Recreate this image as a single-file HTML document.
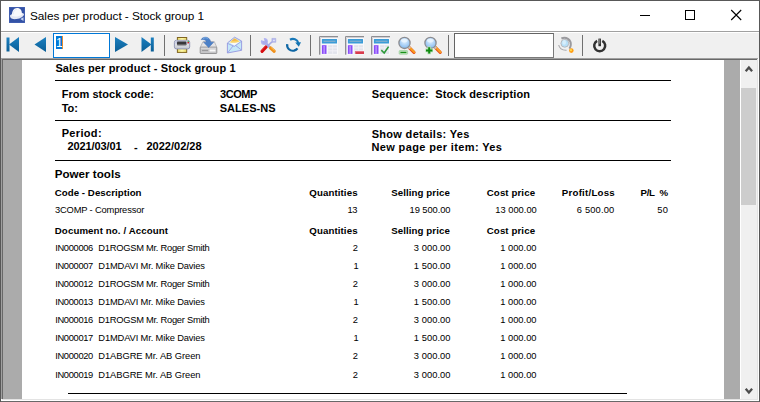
<!DOCTYPE html>
<html>
<head>
<meta charset="utf-8">
<title>Sales per product - Stock group 1</title>
<style>
html,body{margin:0;padding:0;}
body{width:760px;height:402px;overflow:hidden;background:#fff;font-family:"Liberation Sans",sans-serif;position:relative;}
#win{position:absolute;left:0;top:0;width:760px;height:402px;background:#fff;overflow:hidden;}
.abs{position:absolute;}
/* window border */
#bt{left:0;top:0;width:760px;height:1px;background:#585858;}
#bl{left:0;top:0;width:1px;height:402px;background:#585858;}
#br{left:759px;top:0;width:1px;height:402px;background:#585858;}
/* title */
#title{left:30px;top:8.5px;font-size:11.8px;color:#000;white-space:nowrap;line-height:15px;letter-spacing:-0.05px;}
/* toolbar */
#tb{left:1px;top:32px;width:758px;height:26px;background:#f0f0f0;}
#tbline{left:1px;top:58px;width:757px;height:1px;background:#a0a0a0;}
#tbline2{left:2px;top:59px;width:756px;height:1px;background:#696969;}
#edgeL1{left:1px;top:59px;width:1px;height:340px;background:#a0a0a0;}
#edgeL2{left:2px;top:60px;width:1px;height:339px;background:#696969;}
#edgeR{left:757px;top:59px;width:1px;height:341px;background:#e3e3e3;}
#edgeR2{left:758px;top:58px;width:1px;height:343px;background:#fff;}
#bot1{left:2px;top:399px;width:756px;height:1px;background:#e3e3e3;}
#bot2{left:1px;top:400px;width:758px;height:1px;background:#fff;}
#bot3{left:0px;top:401px;width:760px;height:1px;background:#686868;}
.sep{position:absolute;top:36px;width:1px;height:20px;background:#8e8e8e;}
/* content */
#grayL{left:3px;top:60px;width:19px;height:339px;background:#ababab;}
#page{left:22px;top:60px;width:702px;height:339px;background:#fff;}
#grayR{left:724px;top:60px;width:16px;height:339px;background:#ababab;}
#sb{left:740px;top:60px;width:17px;height:339px;background:#f0f0f0;border-left:1px solid #fff;box-sizing:border-box;}
#thumb{left:741px;top:88px;width:15px;height:117px;background:#cdcdcd;}
.t{position:absolute;white-space:pre;color:#000;}
.n{color:#000;}
.b{font-weight:bold;}
.r{text-align:right;}
.hl{position:absolute;height:1px;background:#000;}
.row{font-size:10px;}
</style>
</head>
<body>
<div id="win">
<div class="abs" id="title">Sales per product - Stock group 1</div>
<!-- app icon -->
<svg class="abs" style="left:9px;top:7px" width="16" height="16" viewBox="0 0 16 16">
<rect x="0" y="0" width="16" height="16" fill="#4a66b6"/>
<rect x="0.6" y="0.6" width="14.8" height="14.8" fill="#3352a6"/>
<path d="M1 9.3 C0.8 7.4 3.6 6.6 8 6.2 C12 5.8 15 5.8 15 7.2 C15 9 11.6 11.5 7.6 12.1 C4 12.6 1.2 11.4 1 9.3Z" fill="#e4e8f4"/>
<path d="M3 8.8 C2.5 4.2 4.8 0.9 8 0.9 C11.4 0.9 13.3 3.6 12.9 7.7 C10.4 9.6 5.4 10 3 8.8Z" fill="#f8f9fc"/>
<path d="M4.4 7.4 C4.2 4.4 5.6 2.6 7.8 2.4" stroke="#e2e6f2" stroke-width="0.8" fill="none"/>
<path d="M11.3 12.1 L14.5 10.2 L14.5 14 Z" fill="#c4d2f0"/>
</svg>
<!-- caption buttons -->
<svg class="abs" style="left:622px;top:1px" width="137" height="30" viewBox="0 0 137 30">
<path d="M18 14.5 H28" stroke="#000" stroke-width="1" fill="none"/>
<rect x="63.5" y="9.5" width="9" height="9" stroke="#000" stroke-width="1" fill="none"/>
<path d="M109.2 9 L119.2 19 M119.2 9 L109.2 19" stroke="#000" stroke-width="1.1" fill="none"/>
</svg>

<div class="abs" id="tb"></div>
<div class="abs" id="tbline"></div>
<div class="abs" id="tbline2"></div>

<!-- toolbar icons -->
<svg class="abs" style="left:0;top:31px" width="760" height="28" viewBox="0 31 760 28">
<defs>
<linearGradient id="gb" x1="0" y1="0" x2="0" y2="1"><stop offset="0" stop-color="#1c80c0"/><stop offset="1" stop-color="#0a5e96"/></linearGradient>
<linearGradient id="gy" x1="0" y1="0" x2="1" y2="0"><stop offset="0" stop-color="#e8d860"/><stop offset="0.5" stop-color="#fff9a8"/><stop offset="1" stop-color="#e8d860"/></linearGradient>
<linearGradient id="gp" x1="0" y1="0" x2="0" y2="1"><stop offset="0" stop-color="#f4f6f8"/><stop offset="1" stop-color="#c4c8d0"/></linearGradient>
<radialGradient id="gl" cx="0.5" cy="0.35" r="0.7"><stop offset="0" stop-color="#e4f2ff"/><stop offset="1" stop-color="#7ab4ee"/></radialGradient>
<g id="rep">
<rect x="0" y="0" width="19" height="18.7" fill="#f8f8fa"/>
<path d="M0.5 18.7 V0.5 H19" stroke="#8e8e92" stroke-width="1" fill="none"/>
<path d="M1.5 18.7 V1.5 H19" stroke="#cfcfd3" stroke-width="1" fill="none"/>
<rect x="2.9" y="2.9" width="15.1" height="4.7" rx="0.4" fill="#3a9cd8"/>
<rect x="4.5" y="4.7" width="12" height="1.2" fill="#86b0cc"/>
<rect x="2.9" y="9.2" width="4.6" height="8.7" fill="#8a4cf8"/>
<rect x="4.5" y="10" width="1.2" height="7.9" fill="#c4a4ff"/>
</g>
<g id="repgrid">
<rect x="9.1" y="9.2" width="8.9" height="8.7" fill="#e2e4ec"/>
<rect x="9.1" y="11.4" width="8.9" height="0.9" fill="#f4f4f8"/>
<rect x="9.1" y="14.4" width="8.9" height="0.9" fill="#f4f4f8"/>
<rect x="13.2" y="9.2" width="0.9" height="8.7" fill="#f0f0f6"/>
</g>
</defs>
<!-- title/toolbar divider -->
<rect x="1" y="31" width="758" height="1" fill="#a0a0a0"/>
<rect x="1" y="32" width="758" height="1" fill="#ffffff"/>
<!-- first -->
<rect x="6.5" y="37.5" width="3" height="14" fill="url(#gb)"/>
<path d="M19 37 L19 52 L9 44.5 Z" fill="url(#gb)"/>
<!-- prev -->
<path d="M46 37 L46 52 L34.5 44.5 Z" fill="url(#gb)"/>
<!-- next -->
<path d="M115 37 L115 52 L128 44.5 Z" fill="url(#gb)"/>
<!-- last -->
<path d="M141.5 37 L141.5 52 L151.5 44.5 Z" fill="url(#gb)"/>
<rect x="150.8" y="37.5" width="3" height="14" fill="url(#gb)"/>
<!-- separators -->
<g fill="#707070">
<rect x="164" y="35" width="1" height="21"/>
<rect x="250" y="35" width="1" height="21"/>
<rect x="310" y="35" width="1" height="21"/>
<rect x="448" y="35" width="1" height="21"/>
<rect x="582" y="35" width="1" height="21"/>
</g>
<!-- printer -->
<rect x="177.4" y="37.5" width="9.3" height="5" fill="url(#gy)" stroke="#806420" stroke-width="1"/>
<rect x="177.4" y="47.6" width="9.3" height="4.8" fill="url(#gy)" stroke="#806420" stroke-width="1"/>
<rect x="174.4" y="40.3" width="15.3" height="8.6" rx="2" fill="url(#gp)" stroke="#8a90b0" stroke-width="0.9"/>
<rect x="175.2" y="40.8" width="13.7" height="3" rx="1.2" fill="#c4c8e0"/>
<rect x="177" y="41.6" width="9.4" height="3.6" rx="0.8" fill="#38383a"/>
<rect x="177" y="44.2" width="9.4" height="1" fill="#707074"/>
<rect x="187.5" y="42" width="1.5" height="1.4" fill="#d81820"/>
<rect x="187.5" y="40.9" width="1.5" height="1.1" fill="#50c050"/>
<!-- export (drive + arrow) -->
<path d="M200.3 47.3 L203 41.6 H214.3 L216.8 47.3 Z" fill="#e4e4e6" stroke="#b0b0b2" stroke-width="0.8"/>
<rect x="200.2" y="47.2" width="16.6" height="6.3" rx="0.6" fill="#c6c6c8" stroke="#8e8e90" stroke-width="0.9"/>
<rect x="201" y="47.7" width="15" height="1" fill="#dedee0"/>
<rect x="209.5" y="49.5" width="6" height="2" fill="#fafafa"/>
<rect x="202" y="49.9" width="6" height="1.2" fill="#9a9a9c"/>
<path d="M201.2 39.6 C202.5 37 206.5 36.6 208.6 38.2 C210 39.4 210.6 41 210.7 42.2 H213.6 L208.7 47.6 L203.6 42.2 H206.4 C206.3 40.8 205 39.2 201.2 39.6 Z" fill="#4a80c8" stroke="#3a68b0" stroke-width="0.5"/>
<path d="M203 38.8 C204.5 37.6 207 37.6 208.2 38.8" stroke="#7ab0e8" stroke-width="0.8" fill="none"/>
<!-- envelope -->
<path d="M227.4 43 L234.6 37.2 L241.6 41 V50.3 L227.4 53 Z" fill="#c4e8f8" stroke="#9496e0" stroke-width="0.9"/>
<path d="M229.3 42.6 L234.6 38.4 L240 41.4 L234.4 45.6 Z" fill="#fafafa"/>
<path d="M229.6 42.2 L234.6 38.2 L239.8 41.2 C237 42.8 232.5 43.2 229.6 42.2 Z" fill="#f8d468"/>
<path d="M231.5 41 L234.6 38.6 L237.8 40.4 Z" fill="#f4b448"/>
<path d="M227.6 43.4 L234.3 46.4 L241.4 41.4 M227.8 52.6 L233 46 M241.4 50 L235.8 45.6" stroke="#9496e0" stroke-width="0.8" fill="none"/>
<!-- tools -->
<path d="M267 46.4 L272 41.8" stroke="#a8ace4" stroke-width="1.7"/>
<path d="M271.9 38.4 H275.8 V42.3 H271.9 Z" fill="#b4b8ee" stroke="#a0a4e0" stroke-width="0.5"/>
<rect x="273.3" y="39.8" width="1.3" height="1.3" fill="#f4f4fc"/>
<path d="M266.4 46.6 L262 51.4" stroke="#d60c10" stroke-width="3.1" stroke-linecap="round"/>
<path d="M265.2 46.2 L261.4 50.2" stroke="#f04848" stroke-width="0.8" stroke-linecap="round"/>
<path d="M266 43.4 L270.2 47.8" stroke="#a4a8e6" stroke-width="2.4"/>
<circle cx="264.4" cy="41.4" r="3.5" fill="#b2b4f2"/>
<circle cx="264.9" cy="41.9" r="2.4" fill="#a0a4e4" opacity="0.5"/>
<path d="M264.6 41.2 L259.5 39.4 L263.2 35.8 Z" fill="#f0f0f0"/>
<path d="M270.6 48 L274.2 51.2" stroke="#f0901c" stroke-width="3.2" stroke-linecap="round"/>
<path d="M271.2 47.6 L274.2 50.2" stroke="#ffc24c" stroke-width="0.9" stroke-linecap="round"/>
<!-- refresh -->
<path d="M290 39.8 C293 38 297.4 39.2 298.3 43" stroke="#1878b8" stroke-width="2.2" fill="none"/>
<path d="M295.2 42.6 L301 42.2 L298.8 46.8 Z" fill="#1474b2"/>
<path d="M287.2 44.2 C286.6 48.4 290.2 51.4 294 50.6 C295.6 50.2 296.8 49.4 297.5 48.4" stroke="#0e66a4" stroke-width="2.2" fill="none"/>
<!-- report icons -->
<g transform="translate(319,36)"><use href="#rep"/><use href="#repgrid"/></g>
<g transform="translate(345,36)"><use href="#rep"/><use href="#repgrid"/><rect x="10.3" y="15" width="8.7" height="3" fill="#d83c4c"/><rect x="10.3" y="15" width="8.7" height="0.9" fill="#e87888"/></g>
<g transform="translate(371,36)"><use href="#rep"/><use href="#repgrid"/><path d="M10.3 14.2 L13.2 17 L17.6 10.6" stroke="#2e9a3a" stroke-width="1.6" fill="none"/></g>
<!-- zoom out -->
<path d="M409 47.4 L414 52.4" stroke="#e8501c" stroke-width="3.2" stroke-linecap="round"/>
<path d="M409.3 47.1 L414.3 52.1" stroke="#f8a020" stroke-width="2" stroke-linecap="round"/>
<path d="M408.2 46.6 L410 48.4" stroke="#c4c4c4" stroke-width="2.4"/>
<circle cx="404.5" cy="42.9" r="5.6" fill="url(#gl)" stroke="#8c8c90" stroke-width="1.3"/>
<ellipse cx="404.3" cy="40.6" rx="3.4" ry="1.8" fill="#ecf6ff" opacity="0.8"/>
<rect x="399.2" y="50.6" width="8.4" height="3.6" rx="0.6" fill="#c4e6c4" stroke="#88c888" stroke-width="0.6"/>
<rect x="400.4" y="51.8" width="6" height="1.3" fill="#189018"/>
<!-- zoom in -->
<path d="M435.2 47.4 L440.2 52.4" stroke="#e8501c" stroke-width="3.2" stroke-linecap="round"/>
<path d="M435.5 47.1 L440.5 52.1" stroke="#f8a020" stroke-width="2" stroke-linecap="round"/>
<path d="M434.2 46.6 L436 48.4" stroke="#c4c4c4" stroke-width="2.4"/>
<circle cx="430.5" cy="42.9" r="5.6" fill="url(#gl)" stroke="#8c8c90" stroke-width="1.3"/>
<ellipse cx="430.3" cy="40.6" rx="3.4" ry="1.8" fill="#ecf6ff" opacity="0.8"/>
<path d="M425.4 50.4 H433 M429.2 46.6 V54.2" stroke="#b8e0b8" stroke-width="3.6"/>
<path d="M426 50.4 H432.4 M429.2 47.2 V53.6" stroke="#108a10" stroke-width="2"/>
<!-- search icon -->
<path d="M558.7 45 C559.4 48.2 562.4 50.4 566.6 50.2" stroke="#a6a6aa" stroke-width="1.1" fill="none"/>
<circle cx="564.8" cy="43.3" r="3.9" fill="#b8e0f8" stroke="#b4b4b8" stroke-width="0.9"/>
<path d="M561.4 38.5 C566 36.2 571.2 39.6 570.8 44.8 C570.6 46.6 570 47.8 569.4 48.6" stroke="#9a9a9e" stroke-width="2" fill="none"/>
<ellipse cx="564.2" cy="42.4" rx="1.8" ry="2.4" fill="#e4f4fc" opacity="0.7"/>
<circle cx="571.3" cy="50.6" r="2.3" fill="#ff9c14"/>
<circle cx="570.9" cy="50.2" r="1.1" fill="#ffd848"/>
<!-- power -->
<path d="M597.1 40.85 A5.5 5.5 0 1 0 602.3 40.85" stroke="#323232" stroke-width="2.5" fill="none"/>
<path d="M599.7 38.6 V46.2" stroke="#323232" stroke-width="2.6"/>
<path d="M599.7 39.2 V43.8" stroke="#8c8c8c" stroke-width="0.9"/>
</svg>
<!-- page number edit -->
<div class="abs" style="left:53px;top:33px;width:57px;height:25px;box-sizing:border-box;border:1px solid #0078d7;background:#fff;"></div>
<div class="abs" style="left:56px;top:36px;width:6px;height:13px;background:#0078d7;"></div>
<div class="abs" style="left:62px;top:36px;width:1px;height:13px;background:#e88a30;"></div>
<div class="abs" style="left:56px;top:36px;width:7px;font-size:12px;line-height:14px;color:#fff;">1</div>
<!-- search edit -->
<div class="abs" style="left:454px;top:33px;width:100px;height:25px;box-sizing:border-box;border:1px solid #7a7a7a;border-top-color:#646464;border-left-color:#646464;background:#fff;"></div>

<div class="abs" id="grayL"></div>
<div class="abs" id="page"></div>
<div class="abs" id="grayR"></div>
<div class="abs" id="sb"></div>
<div class="abs" id="thumb"></div>
<div class="abs" id="edgeL1"></div>
<div class="abs" id="edgeL2"></div>
<div class="abs" id="edgeR"></div>
<div class="abs" id="edgeR2"></div>
<div class="abs" id="bot1"></div>
<div class="abs" id="bot2"></div>
<div class="abs" id="bot3"></div>
<svg class="abs" style="left:741px;top:60px" width="16" height="339" viewBox="0 0 16 339">
<path d="M4.7 11.2 L7.9 7.6 L11.1 11.2" stroke="#4c4c4c" stroke-width="2.3" fill="none"/>
<path d="M4.7 328.8 L7.9 332.4 L11.1 328.8" stroke="#4c4c4c" stroke-width="2.3" fill="none"/>
</svg>

<!--LINES-->
<div class="hl" style="left:55px;top:80px;width:616px;"></div>
<div class="hl" style="left:55px;top:120px;width:616px;"></div>
<div class="hl" style="left:55px;top:160px;width:616px;"></div>
<div class="hl" style="left:68px;top:393px;width:559px;"></div>
<!--/LINES-->
<!--TEXT-->
<div class="t b" style="left:55.42px;top:61.19px;font-size:11.0px;line-height:14px;letter-spacing:0.129px;">Sales per product - Stock group 1</div>
<div class="t b" style="left:61.67px;top:87.19px;font-size:11.0px;line-height:14px;letter-spacing:0.033px;">From stock code:</div>
<div class="t b" style="left:61.67px;top:101.19px;font-size:11.0px;line-height:14px;">To:</div>
<div class="t b" style="left:219.95px;top:87.19px;font-size:11.0px;line-height:14px;letter-spacing:-0.430px;">3COMP</div>
<div class="t b" style="left:219.68px;top:101.19px;font-size:11.0px;line-height:14px;letter-spacing:0.044px;">SALES-NS</div>
<div class="t b" style="left:371.68px;top:87.19px;font-size:11.0px;line-height:14px;letter-spacing:0.162px;">Sequence:  Stock description</div>
<div class="t b" style="left:61.67px;top:126.19px;font-size:11.0px;line-height:14px;letter-spacing:0.337px;">Period:</div>
<div class="t b" style="left:67.45px;top:139.19px;font-size:11.0px;line-height:14px;letter-spacing:-0.101px;">2021/03/01</div>
<div class="t b" style="left:133.88px;top:140.19px;font-size:11.0px;line-height:14px;">-</div>
<div class="t b" style="left:146.45px;top:139.19px;font-size:11.0px;line-height:14px;letter-spacing:0.010px;">2022/02/28</div>
<div class="t b" style="left:371.68px;top:127.19px;font-size:11.0px;line-height:14px;letter-spacing:0.309px;">Show details: Yes</div>
<div class="t b" style="left:371.48px;top:140.19px;font-size:11.0px;line-height:14px;letter-spacing:0.366px;">New page per item: Yes</div>
<div class="t b" style="left:54.63px;top:166.48px;font-size:11.6px;line-height:15px;letter-spacing:0.029px;">Power tools</div>
<div class="t b" style="left:54.77px;top:186.14px;font-size:9.7px;line-height:13px;letter-spacing:0.037px;">Code - Description</div>
<div class="t b" style="left:309.27px;top:186.14px;font-size:9.7px;line-height:13px;letter-spacing:0.098px;">Quantities</div>
<div class="t b" style="left:391.27px;top:186.14px;font-size:9.7px;line-height:13px;letter-spacing:0.075px;">Selling price</div>
<div class="t b" style="left:486.77px;top:186.14px;font-size:9.7px;line-height:13px;letter-spacing:0.098px;">Cost price</div>
<div class="t b" style="left:561.77px;top:186.14px;font-size:9.7px;line-height:13px;letter-spacing:0.240px;">Profit/Loss</div>
<div class="t b" style="left:640.52px;top:186.14px;font-size:9.7px;line-height:13px;letter-spacing:-0.279px;">P/L  %</div>
<div class="t n" style="left:55.03px;top:203.77px;font-size:9.33px;line-height:12px;letter-spacing:-0.168px;">3COMP - Compressor</div>
<div class="t n" style="left:347.53px;top:203.77px;font-size:9.33px;line-height:12px;letter-spacing:-0.411px;">13</div>
<div class="t n" style="left:409.53px;top:203.77px;font-size:9.33px;line-height:12px;letter-spacing:-0.065px;">19 500.00</div>
<div class="t n" style="left:495.28px;top:203.77px;font-size:9.33px;line-height:12px;">13 000.00</div>
<div class="t n" style="left:576.80px;top:203.77px;font-size:9.33px;line-height:12px;letter-spacing:0.164px;">6 500.00</div>
<div class="t n" style="left:657.30px;top:203.77px;font-size:9.33px;line-height:12px;letter-spacing:0.322px;">50</div>
<div class="t b" style="left:54.77px;top:224.14px;font-size:9.7px;line-height:13px;letter-spacing:0.105px;">Document no. / Account</div>
<div class="t b" style="left:309.27px;top:224.14px;font-size:9.7px;line-height:13px;letter-spacing:0.098px;">Quantities</div>
<div class="t b" style="left:391.27px;top:224.14px;font-size:9.7px;line-height:13px;letter-spacing:0.075px;">Selling price</div>
<div class="t b" style="left:486.77px;top:224.14px;font-size:9.7px;line-height:13px;letter-spacing:0.098px;">Cost price</div>
<div class="t n" style="left:55.20px;top:241.77px;font-size:9.33px;line-height:12px;letter-spacing:-0.337px;">IN000006</div>
<div class="t n" style="left:98.30px;top:241.77px;font-size:9.33px;line-height:12px;letter-spacing:-0.259px;">D1ROGSM Mr. Roger Smith</div>
<div class="t n" style="left:352.78px;top:241.77px;font-size:9.33px;line-height:12px;">2</div>
<div class="t n" style="left:413.78px;top:241.77px;font-size:9.33px;line-height:12px;letter-spacing:0.060px;">3 000.00</div>
<div class="t n" style="left:500.28px;top:241.77px;font-size:9.33px;line-height:12px;letter-spacing:-0.012px;">1 000.00</div>
<div class="t n" style="left:55.20px;top:259.77px;font-size:9.33px;line-height:12px;letter-spacing:-0.337px;">IN000007</div>
<div class="t n" style="left:98.30px;top:259.77px;font-size:9.33px;line-height:12px;letter-spacing:-0.137px;">D1MDAVI Mr. Mike Davies</div>
<div class="t n" style="left:353.53px;top:259.77px;font-size:9.33px;line-height:12px;">1</div>
<div class="t n" style="left:413.78px;top:259.77px;font-size:9.33px;line-height:12px;letter-spacing:0.060px;">1 500.00</div>
<div class="t n" style="left:500.28px;top:259.77px;font-size:9.33px;line-height:12px;letter-spacing:-0.012px;">1 000.00</div>
<div class="t n" style="left:55.20px;top:277.77px;font-size:9.33px;line-height:12px;letter-spacing:-0.337px;">IN000012</div>
<div class="t n" style="left:98.30px;top:277.77px;font-size:9.33px;line-height:12px;letter-spacing:-0.259px;">D1ROGSM Mr. Roger Smith</div>
<div class="t n" style="left:352.78px;top:277.77px;font-size:9.33px;line-height:12px;">2</div>
<div class="t n" style="left:413.78px;top:277.77px;font-size:9.33px;line-height:12px;letter-spacing:0.060px;">3 000.00</div>
<div class="t n" style="left:500.28px;top:277.77px;font-size:9.33px;line-height:12px;letter-spacing:-0.012px;">1 000.00</div>
<div class="t n" style="left:55.20px;top:295.77px;font-size:9.33px;line-height:12px;letter-spacing:-0.337px;">IN000013</div>
<div class="t n" style="left:98.30px;top:295.77px;font-size:9.33px;line-height:12px;letter-spacing:-0.137px;">D1MDAVI Mr. Mike Davies</div>
<div class="t n" style="left:353.53px;top:295.77px;font-size:9.33px;line-height:12px;">1</div>
<div class="t n" style="left:413.78px;top:295.77px;font-size:9.33px;line-height:12px;letter-spacing:0.060px;">1 500.00</div>
<div class="t n" style="left:500.28px;top:295.77px;font-size:9.33px;line-height:12px;letter-spacing:-0.012px;">1 000.00</div>
<div class="t n" style="left:55.20px;top:313.77px;font-size:9.33px;line-height:12px;letter-spacing:-0.337px;">IN000016</div>
<div class="t n" style="left:98.30px;top:313.77px;font-size:9.33px;line-height:12px;letter-spacing:-0.259px;">D1ROGSM Mr. Roger Smith</div>
<div class="t n" style="left:352.78px;top:313.77px;font-size:9.33px;line-height:12px;">2</div>
<div class="t n" style="left:413.78px;top:313.77px;font-size:9.33px;line-height:12px;letter-spacing:0.060px;">3 000.00</div>
<div class="t n" style="left:500.28px;top:313.77px;font-size:9.33px;line-height:12px;letter-spacing:-0.012px;">1 000.00</div>
<div class="t n" style="left:55.20px;top:331.77px;font-size:9.33px;line-height:12px;letter-spacing:-0.337px;">IN000017</div>
<div class="t n" style="left:98.30px;top:331.77px;font-size:9.33px;line-height:12px;letter-spacing:-0.137px;">D1MDAVI Mr. Mike Davies</div>
<div class="t n" style="left:353.53px;top:331.77px;font-size:9.33px;line-height:12px;">1</div>
<div class="t n" style="left:413.78px;top:331.77px;font-size:9.33px;line-height:12px;letter-spacing:0.060px;">1 500.00</div>
<div class="t n" style="left:500.28px;top:331.77px;font-size:9.33px;line-height:12px;letter-spacing:-0.012px;">1 000.00</div>
<div class="t n" style="left:55.20px;top:349.77px;font-size:9.33px;line-height:12px;letter-spacing:-0.337px;">IN000020</div>
<div class="t n" style="left:98.30px;top:349.77px;font-size:9.33px;line-height:12px;letter-spacing:-0.050px;">D1ABGRE Mr. AB Green</div>
<div class="t n" style="left:352.78px;top:349.77px;font-size:9.33px;line-height:12px;">2</div>
<div class="t n" style="left:413.78px;top:349.77px;font-size:9.33px;line-height:12px;letter-spacing:0.060px;">3 000.00</div>
<div class="t n" style="left:500.28px;top:349.77px;font-size:9.33px;line-height:12px;letter-spacing:-0.012px;">1 000.00</div>
<div class="t n" style="left:55.20px;top:368.77px;font-size:9.33px;line-height:12px;letter-spacing:-0.337px;">IN000019</div>
<div class="t n" style="left:98.30px;top:368.77px;font-size:9.33px;line-height:12px;letter-spacing:-0.050px;">D1ABGRE Mr. AB Green</div>
<div class="t n" style="left:352.78px;top:368.77px;font-size:9.33px;line-height:12px;">2</div>
<div class="t n" style="left:413.78px;top:368.77px;font-size:9.33px;line-height:12px;letter-spacing:0.060px;">3 000.00</div>
<div class="t n" style="left:500.28px;top:368.77px;font-size:9.33px;line-height:12px;letter-spacing:-0.012px;">1 000.00</div>
<!--/TEXT-->
<div class="abs" id="bt"></div>
<div class="abs" id="bl"></div>
<div class="abs" id="br"></div>
</div>
</body>
</html>
